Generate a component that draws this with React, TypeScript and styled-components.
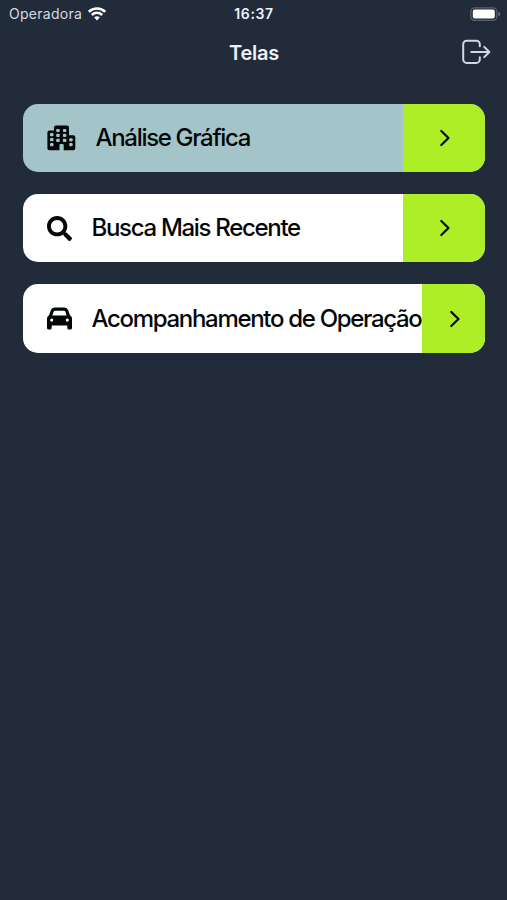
import React from "react";
import styled, { createGlobalStyle } from "styled-components";
import { FaCar } from "react-icons/fa6";
import { FaSearch } from "react-icons/fa";

const GlobalStyle = createGlobalStyle`
  * { box-sizing: border-box; }
  body {
    margin: 0;
    background: #212b3a;
    font-family: Inter, "Liberation Sans", sans-serif;
    overflow: hidden;
  }
  svg { display: block; flex: none; }
`;

const Screen = styled.main`
  height: 900px;
  background: #212b3a;
`;

const StatusBar = styled.div`
  display: grid;
  grid-template-columns: 1fr auto 1fr;
  align-items: center;
  height: 27px;
  padding: 0 6px 0 9px;
  color: #fff;
`;

const Carrier = styled.div`
  display: flex;
  align-items: center;
  gap: 6px;
  font-size: 14px;
  letter-spacing: 0.28px;
  color: #d5dae2;
`;

const Clock = styled.time`
  margin-right: 2px;
  font-size: 14px;
  font-weight: 600;
  letter-spacing: 0.6px;
  color: #eef2f8;
`;

const Battery = styled.div`
  display: flex;
  justify-content: flex-end;
`;

const Header = styled.header`
  display: grid;
  grid-template-columns: 1fr auto 1fr;
  align-items: center;
  height: 50px;
  padding: 0 16px;
`;

const Title = styled.h1`
  grid-column: 2;
  margin: 1px 0 0 1px;
  font-size: 20px;
  font-weight: 600;
  letter-spacing: -0.25px;
  color: #edf1f8;
`;

const LogoutButton = styled.button`
  justify-self: end;
  padding: 0;
  border: 0;
  background: none;
  color: #d0d9e1;
`;

const Menu = styled.nav`
  display: flex;
  flex-direction: column;
  gap: 22px;
  padding: 26.6px 22px 0 23px;
`;

const Card = styled.button<{ $active?: boolean }>`
  display: flex;
  align-items: stretch;
  height: 68.4px;
  padding: 0;
  border: 0;
  border-radius: 15px;
  overflow: hidden;
  background: ${(p) => (p.$active ? "#a3c4c9" : "#fff")};
  color: #040708;
  font-family: inherit;
  text-align: left;
`;

const CardBody = styled.span<{ $width: number }>`
  display: flex;
  flex: 0 0 ${(p) => p.$width}px;
  align-items: center;
  min-width: 0;
  padding-left: 24px;
`;

const Label = styled.span`
  margin-left: 19.5px;
  font-size: 24px;
  font-weight: 450;
  line-height: 30px;
  letter-spacing: -1.31px;
  white-space: nowrap;
`;

const Arrow = styled.span`
  display: flex;
  flex: 1 0 0;
  align-items: center;
  justify-content: center;
  padding-left: 2px;
  background: #aeee26;
`;

const WifiIcon = () => (
  <svg width="18" height="14" viewBox="0 0 18 14" fill="none" stroke="#fff" strokeWidth="2.5">
    <path d="M.8 4.8a11.6 11.6 0 0 1 16.4 0" />
    <path d="M3.8 8a7.4 7.4 0 0 1 10.4 0" />
    <path d="M6.2 10.6a4 4 0 0 1 5.6 0L9 13.5z" fill="#fff" stroke="none" />
  </svg>
);

const BatteryIcon = () => (
  <svg width="31" height="14" viewBox="0 0 31 14">
    <rect x=".8" y=".8" width="26" height="12.6" rx="3.8" fill="none" stroke="#5d6270" strokeWidth="1.2" />
    <rect x="2.8" y="2.6" width="22" height="9" rx="2" fill="#fff" />
    <path d="M28.3 4.8c1.5.5 2 1.3 2 2.3s-.5 1.8-2 2.3z" fill="#6c707c" />
  </svg>
);

const LogoutIcon = () => (
  <svg width="30" height="26" viewBox="0 0 30 26" fill="none" stroke="currentColor" strokeWidth="2" strokeLinecap="round" strokeLinejoin="round">
    <path d="M18.8 7.3V5.2a3.5 3.5 0 0 0-3.5-3.5H5.7a3.5 3.5 0 0 0-3.5 3.5v15.2a3.5 3.5 0 0 0 3.5 3.5h9.6a3.5 3.5 0 0 0 3.5-3.5v-2.1" />
    <path d="M10.3 13H28.2M23.2 7.9l5.2 5.1-5.2 5.1" />
  </svg>
);

const CityIcon = () => (
  <svg width="29" height="26" viewBox="0 0 29 26">
    <path
      fill="currentColor"
      d="M9 .5h11a2 2 0 0 1 2 2v7.7h4.3a2 2 0 0 1 2 2v11.1a2 2 0 0 1-2 2H16.7v-5a1.2 1.2 0 0 0-1.2-1.2h-1.8a1.2 1.2 0 0 0-1.2 1.2v5H2.4a2 2 0 0 1-2-2V7.4a2 2 0 0 1 2-2H7V2.5a2 2 0 0 1 2-2z"
    />
    <g fill="#a3c4c9">
      {[
        [3, 8.1], [3, 13], [3, 18],
        [9.2, 3.9], [9.2, 8.8], [9.2, 13.8],
        [15.9, 3.9], [15.9, 8.8], [15.9, 13.8],
        [22.2, 13.2], [22.2, 18.1],
      ].map(([x, y]) => (
        <rect key={`${x}-${y}`} x={x} y={y} width="3.5" height="3.2" rx="1" />
      ))}
    </g>
  </svg>
);

const ChevronIcon = () => (
  <svg width="12" height="18" viewBox="0 0 12 18" fill="none" stroke="currentColor" strokeWidth="2.2" strokeLinecap="round" strokeLinejoin="round">
    <path d="M2.3 2l7.2 7-7.2 7" />
  </svg>
);

const items = [
  { label: "Análise Gráfica", icon: <CityIcon />, width: 380, active: true },
  { label: "Busca Mais Recente", icon: <FaSearch size={25} />, width: 380 },
  { label: "Acompanhamento de Operação", icon: <FaCar size={25} />, width: 399 },
];

export default function App() {
  return (
    <>
      <GlobalStyle />
      <Screen>
        <StatusBar>
          <Carrier>
            Operadora
            <WifiIcon />
          </Carrier>
          <Clock>16:37</Clock>
          <Battery>
            <BatteryIcon />
          </Battery>
        </StatusBar>
        <Header>
          <Title>Telas</Title>
          <LogoutButton aria-label="Sair">
            <LogoutIcon />
          </LogoutButton>
        </Header>
        <Menu>
          {items.map((item) => (
            <Card key={item.label} $active={item.active}>
              <CardBody $width={item.width}>
                {item.icon}
                <Label>{item.label}</Label>
              </CardBody>
              <Arrow>
                <ChevronIcon />
              </Arrow>
            </Card>
          ))}
        </Menu>
      </Screen>
    </>
  );
}
